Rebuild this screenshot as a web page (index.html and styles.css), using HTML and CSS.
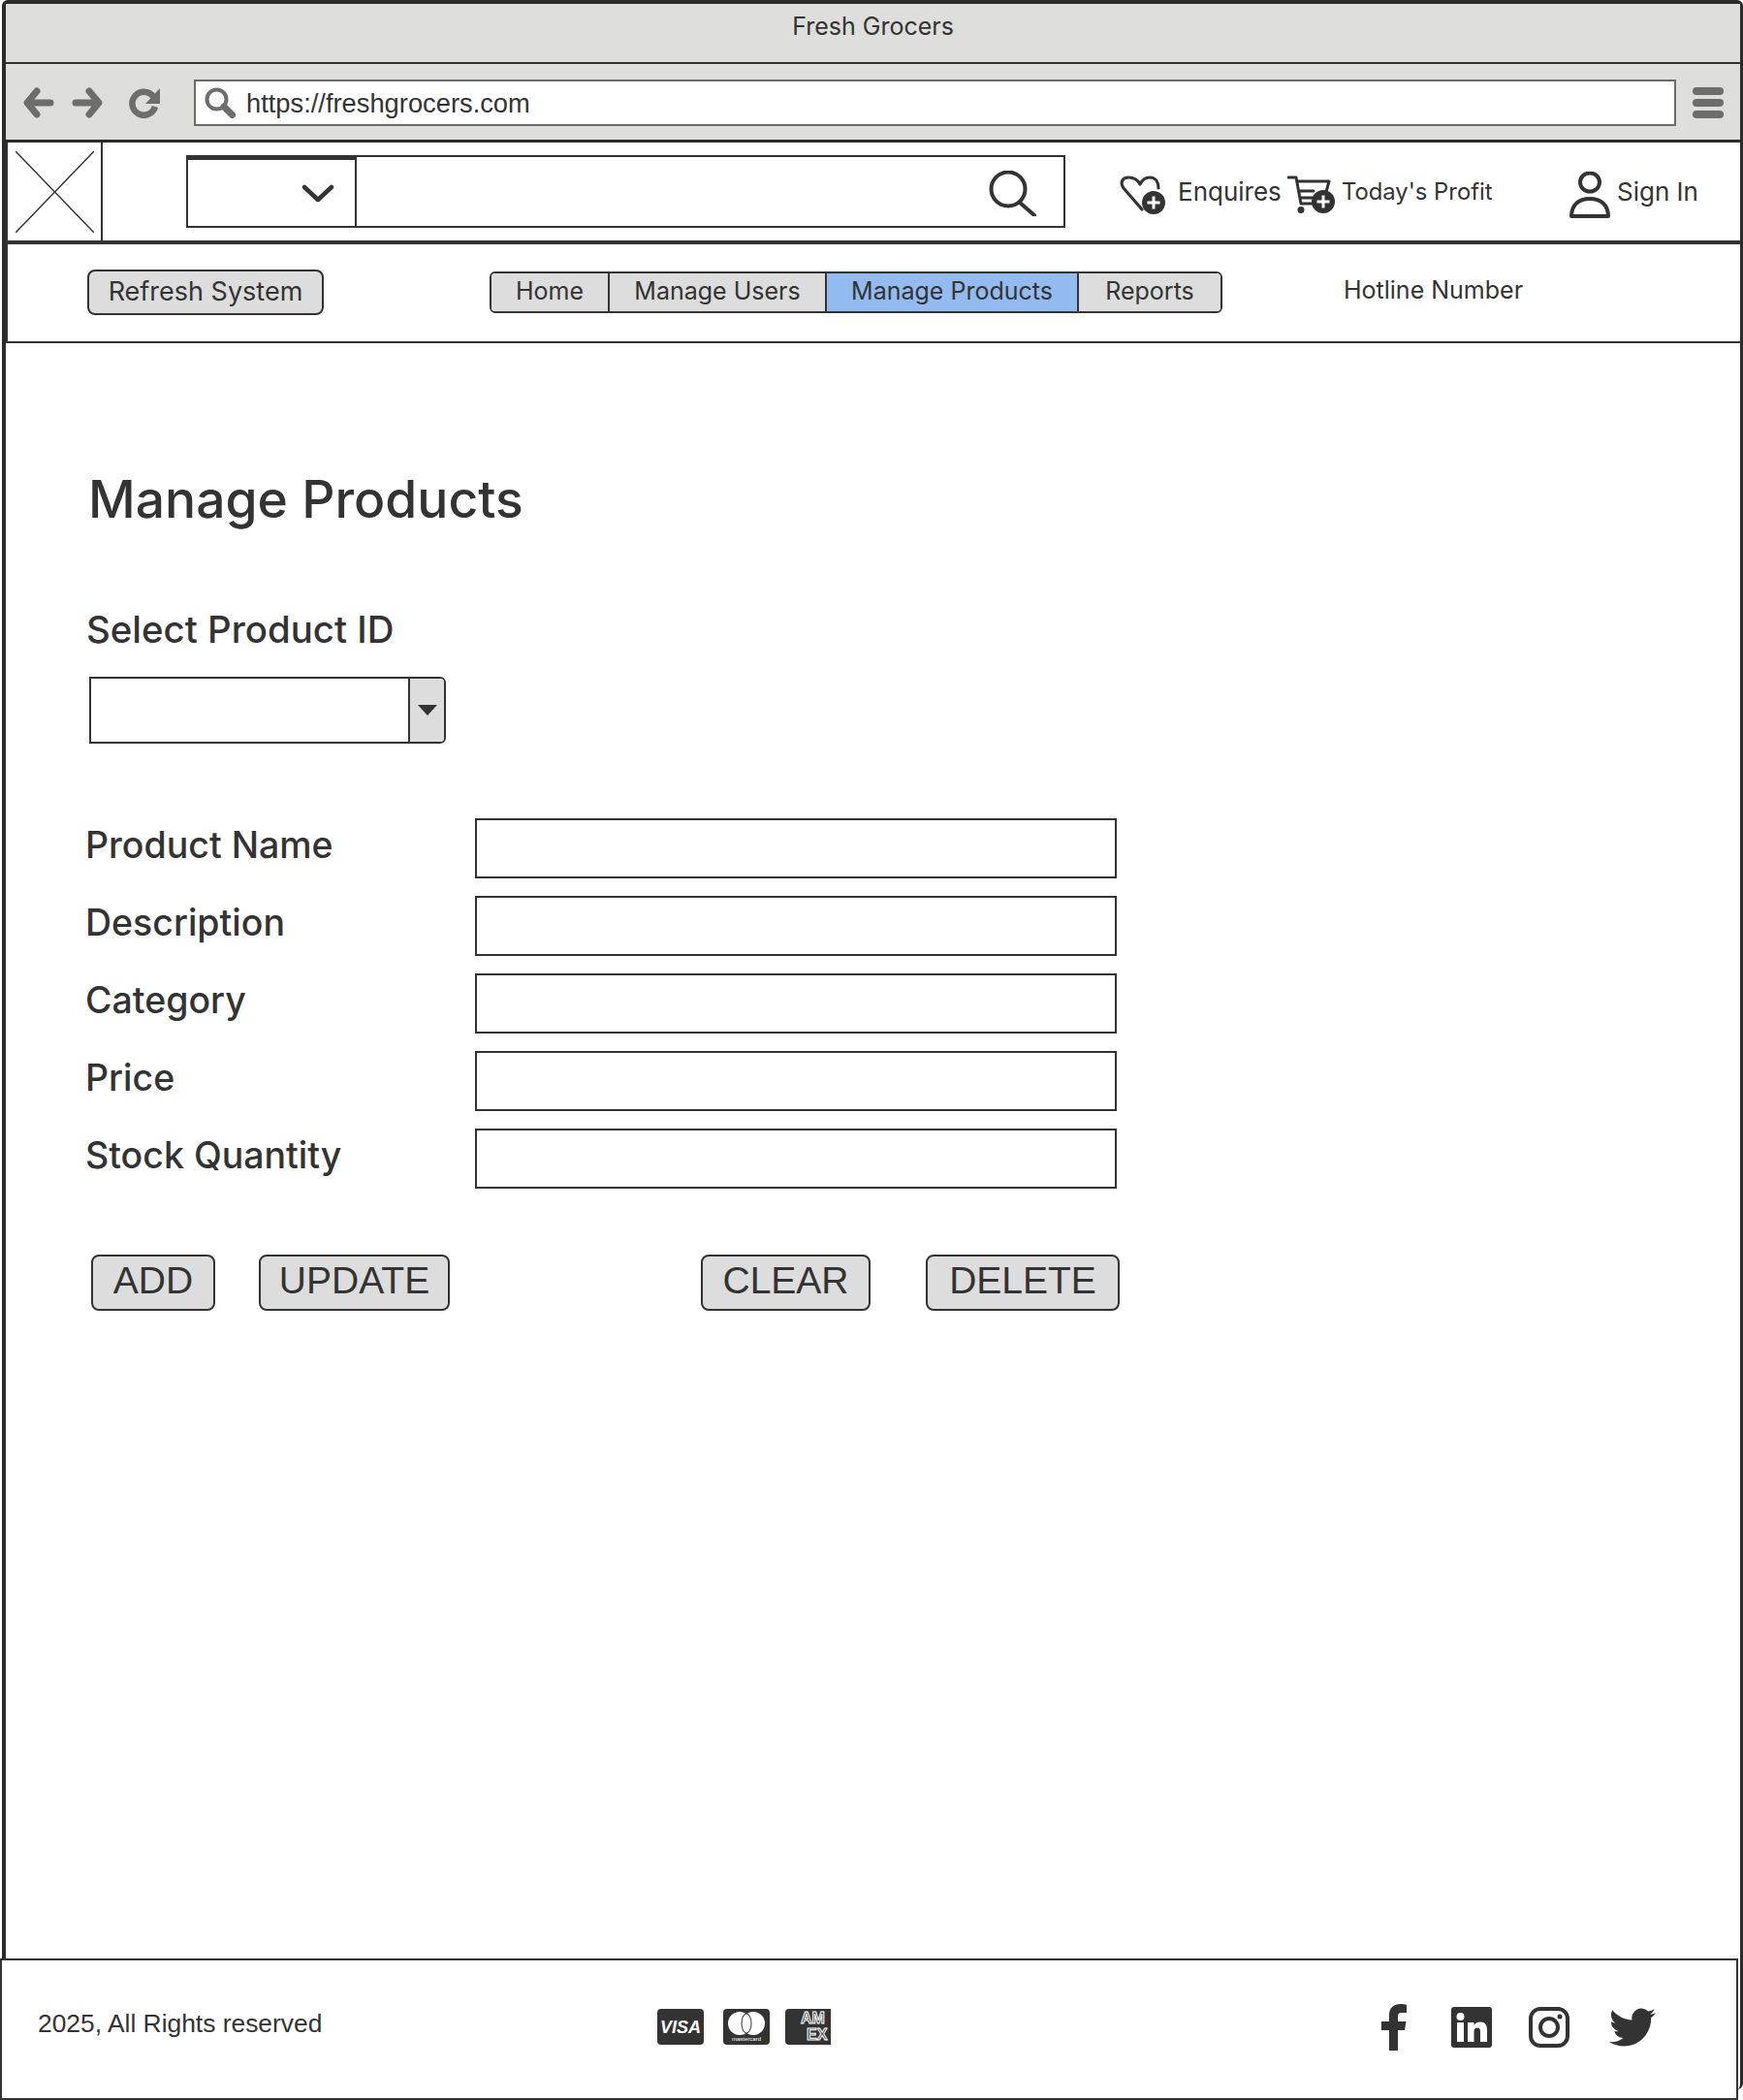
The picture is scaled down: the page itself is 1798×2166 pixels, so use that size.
FILE: index.html
```html
<!DOCTYPE html>
<html lang="en">
<head>
  <meta charset="UTF-8">
  <title>Fresh Grocers</title>
  <link rel="stylesheet" href="styles.css">
</head>
<body>
  <div class="window">
    <div class="titlebar">Fresh Grocers</div>

    <div class="toolbar">
      <svg class="tool-icon" viewBox="0 0 32 32"><path class="tool-stroke" d="M14 4 L4 16 L14 28 M5 16 H28"/></svg>
      <svg class="tool-icon forward" viewBox="0 0 32 32"><path class="tool-stroke" d="M18 4 L28 16 L18 28 M27 16 H4"/></svg>
      <svg class="tool-icon reload" viewBox="0 0 32 32"><path class="tool-stroke no-cap" d="M25 9.500 A12 12 0 1 0 27 20"/><path class="tool-fill" d="M32 1 V17 H17 Z"/></svg>
      <div class="address">
        <svg class="tool-icon" viewBox="0 0 32 32"><circle class="tool-stroke thin" cx="12.500" cy="12.500" r="10"/><path class="tool-stroke" d="M20 20 L28.500 28.500"/></svg>
        <span class="url">https://freshgrocers.com</span>
      </div>
      <div class="menu"><span></span><span></span><span></span></div>
    </div>

    <div class="header">
      <div class="logo">
        <svg viewBox="0 0 81 84" width="81" height="84"><path d="M0 0 L81 84 M81 0 L0 84" stroke="#333" stroke-width="1.500" fill="none"/></svg>
      </div>
      <div class="search">
        <div class="search-select">
          <svg width="34" height="19" viewBox="0 0 34 19"><path d="M3 3 L17 16 L31 3" stroke="#333" stroke-width="4.500" stroke-linecap="round" stroke-linejoin="round" fill="none"/></svg>
        </div>
        <div class="search-input">
          <svg class="search-icon" width="49" height="47" viewBox="0 0 49 47"><circle cx="20" cy="19" r="17.500" stroke="#333" stroke-width="4" fill="none"/><path d="M32 33 L47 46" stroke="#333" stroke-width="4" stroke-linecap="round"/></svg>
        </div>
      </div>

      <div class="head-link enquires">
        <svg width="48" height="40" viewBox="0 0 48 40">
          <path d="M24 35 L5 13 C1 7 4 2 10 2 C16 2 20 5 22 9 C24 5 27 2 32 2 C38 2 41 7 41 13" stroke="#333" stroke-width="3.200" fill="none" stroke-linecap="round" stroke-linejoin="round"/>
          <circle cx="36" cy="28" r="12" fill="#333"/>
          <path d="M36 21.500 V34.500 M29.500 28 H42.500" stroke="#fff" stroke-width="3"/>
        </svg>
        <span>Enquires</span>
      </div>
      <div class="head-link profit">
        <svg width="49" height="40" viewBox="0 0 49 40">
          <path d="M1 2 H9 L14 29 H28 M10 6 H43 L40 17 M12 16 H27 M13 23 H26" stroke="#333" stroke-width="3" fill="none" stroke-linecap="round" stroke-linejoin="round"/>
          <circle cx="14" cy="35.500" r="3.500" fill="#333"/>
          <circle cx="37" cy="27" r="12" fill="#333"/>
          <path d="M37 20.500 V33.500 M30.500 27 H43.500" stroke="#fff" stroke-width="3"/>
        </svg>
        <span>Today's Profit</span>
      </div>
      <div class="head-link signin">
        <svg width="42" height="48" viewBox="0 0 42 48">
          <ellipse cx="21" cy="11" rx="10" ry="9.500" stroke="#333" stroke-width="4" fill="none"/>
          <path d="M2 46 C2 34 10 28 21 28 C32 28 40 34 40 46 Z" stroke="#333" stroke-width="4" fill="none" stroke-linejoin="round"/>
        </svg>
        <span>Sign In</span>
      </div>
    </div>

    <div class="nav">
      <button class="btn refresh">Refresh System</button>
      <div class="tabs">
        <div class="tab tab-home">Home</div>
        <div class="tab tab-users">Manage Users</div>
        <div class="tab tab-products active">Manage Products</div>
        <div class="tab tab-reports">Reports</div>
      </div>
      <div class="hotline">Hotline Number</div>
    </div>

    <div class="main">
      <h1>Manage Products</h1>
      <div class="select-label">Select Product ID</div>
      <div class="select">
        <div class="select-value"></div>
        <div class="select-btn"><span class="caret"></span></div>
      </div>

      <div class="form">
        <label>Product Name</label><input type="text">
        <label>Description</label><input type="text">
        <label>Category</label><input type="text">
        <label>Price</label><input type="text">
        <label>Stock Quantity</label><input type="text">
      </div>

      <div class="actions">
        <button class="btn action add">ADD</button>
        <button class="btn action update">UPDATE</button>
        <button class="btn action clear">CLEAR</button>
        <button class="btn action delete">DELETE</button>
      </div>
    </div>
  </div>

  <div class="footer">
    <div class="copy">2025, All Rights reserved</div>
    <div class="cards">
      <svg width="48" height="37" viewBox="0 0 48 37"><rect width="48" height="37" rx="4" fill="#333"/><text class="visa" x="24" y="25" text-anchor="middle">VISA</text></svg>
      <svg width="48" height="37" viewBox="0 0 48 37"><rect width="48" height="37" rx="4" fill="#333"/><circle cx="17" cy="15" r="12" fill="#fff"/><circle cx="31" cy="15" r="12" fill="#fff"/><ellipse cx="24" cy="15" rx="5" ry="10" fill="#fff" stroke="#333" stroke-width="1"/><text class="mc" x="24" y="33" text-anchor="middle">mastercard</text></svg>
      <svg width="47" height="37" viewBox="0 0 47 37"><path d="M4 0 H47 V37 H4 A4 4 0 0 1 0 33 V4 A4 4 0 0 1 4 0 Z" fill="#333"/><text class="amex" x="16" y="15">AM</text><text class="amex" x="22" y="32">EX</text></svg>
    </div>
    <div class="social">
      <svg class="fb" width="26" height="48" viewBox="0 0 26 48"><path fill="#333" d="M17 48V27h7l1.500-9H17v-5c0-2.500.8-4 4-4h5V.8C25 .6 22.500 0 19.500 0 12.500 0 8 4 8 11.500V18H0v9h8v21z"/></svg>
      <svg class="in" width="42" height="42" viewBox="0 0 42 42"><rect width="42" height="42" rx="3" fill="#333"/><circle cx="9.500" cy="10" r="4" fill="#fff"/><rect x="6" y="16" width="7" height="20" fill="#fff"/><path fill="#fff" d="M17 16h6.500v3c1.500-2.300 3.800-3.500 6.500-3.500 5 0 7 3.300 7 8.500v12h-7V25.500c0-2.500-.8-4-3-4s-3.500 1.500-3.500 4V36H17z"/></svg>
      <svg class="ig" width="42" height="42" viewBox="0 0 42 42"><rect x="2" y="2" width="38" height="38" rx="10" fill="none" stroke="#333" stroke-width="4"/><circle cx="21" cy="21" r="9" fill="none" stroke="#333" stroke-width="4"/><circle cx="32" cy="10" r="2.500" fill="#333"/></svg>
      <svg class="tw" width="48" height="40" viewBox="0 0 24 20"><path fill="#333" transform="translate(0 -2)" d="M23.953 4.570a10 10 0 01-2.825.775 4.958 4.958 0 002.163-2.723c-.951.555-2.005.959-3.127 1.184a4.920 4.920 0 00-8.384 4.482C7.690 8.095 4.067 6.130 1.640 3.162a4.822 4.822 0 00-.666 2.475c0 1.710.870 3.213 2.188 4.096a4.904 4.904 0 01-2.228-.616v.060a4.923 4.923 0 003.946 4.827 4.996 4.996 0 01-2.212.085 4.936 4.936 0 004.604 3.417 9.867 9.867 0 01-6.102 2.105c-.390 0-.779-.023-1.170-.067a13.995 13.995 0 007.557 2.209c9.053 0 13.998-7.496 13.998-13.985 0-.210 0-.420-.015-.630A9.935 9.935 0 0024 4.590z"/></svg>
    </div>
  </div>
</body>
</html>
```

FILE: styles.css
```css
body {
  margin: 0;
  background-color: white;
  color: #333;
  font-family: "Inter", "Liberation Sans", sans-serif;
}

/* browser frame */
.window {
  box-sizing: border-box;
  width: 1796px;
  height: 2155px;
  margin-left: 2px;
  border: 4px solid #2b2b2b;
  border-right-width: 3px;
  border-bottom: none;
  border-radius: 6px;
}
.titlebar {
  box-sizing: border-box;
  height: 62px;
  padding-top: 8px;
  background-color: #dededc;
  border-bottom: 2px solid #333;
  text-align: center;
  font-size: 25px;
  line-height: 30px;
}
.toolbar {
  box-sizing: border-box;
  height: 81px;
  padding-top: 16px;
  padding-left: 18px;
  display: flex;
  align-items: flex-start;
  background-color: #dededc;
  border-bottom: 3px solid #2b2b2b;
}
.tool-icon {
  width: 32px;
  height: 32px;
  flex: none;
}
.tool-stroke {
  fill: none;
  stroke: #6d6d6d;
  stroke-width: 7;
  stroke-linecap: round;
  stroke-linejoin: round;
}
.tool-stroke.thin {
  stroke-width: 4;
}
.tool-stroke.no-cap {
  stroke-linecap: butt;
  stroke-width: 6.500;
}
.tool-fill {
  fill: #6d6d6d;
}
.toolbar > .tool-icon {
  margin-top: 8px;
}
.forward {
  margin-left: 18px;
}
.reload {
  margin-left: 27px;
}
.address {
  box-sizing: border-box;
  width: 1529px;
  height: 48px;
  margin-left: 35px;
  display: flex;
  align-items: center;
  padding-left: 9px;
  background-color: white;
  border: 2px solid #6b6b6b;
}
.url {
  margin-left: 11px;
  padding-top: 2px;
  font-family: "Liberation Sans", sans-serif;
  font-size: 27.300px;
}
.menu {
  margin-left: 17px;
  margin-top: 8px;
  width: 32px;
  display: flex;
  flex-direction: column;
  gap: 4px;
}
.menu span {
  height: 8px;
  border-radius: 4px;
  background-color: #6d6d6d;
}

/* store header */
.header {
  box-sizing: border-box;
  height: 105px;
  display: flex;
  align-items: center;
  border-left: 2px solid #333;
  border-bottom: 4px solid #333;
}
.logo {
  box-sizing: border-box;
  width: 98px;
  height: 101px;
  padding: 9px 0 0 8px;
  border-right: 2px solid #333;
}
.logo svg {
  display: block;
}
.search {
  box-sizing: border-box;
  width: 907px;
  height: 75px;
  margin-left: 86px;
  display: flex;
  border: 2px solid #333;
}
.search-select {
  box-sizing: border-box;
  width: 174px;
  display: flex;
  align-items: center;
  justify-content: flex-end;
  padding-right: 21px;
  border-top: 3px solid #333;
  border-right: 2px solid #333;
}
.search-input {
  flex: 1;
  display: flex;
  align-items: center;
  justify-content: flex-end;
  padding-right: 28px;
}
.search-icon {
  margin-top: 4px;
}
.head-link {
  display: flex;
  align-items: center;
  font-size: 26px;
  white-space: nowrap;
  flex: none;
}
.head-link svg {
  flex: none;
  margin-top: 7px;
}
.enquires {
  width: 164px;
  margin-left: 55px;
  gap: 13px;
}
.profit {
  width: 210px;
  margin-left: 10px;
  gap: 7px;
}
.profit span {
  font-size: 23.800px;
}
.signin {
  margin-left: 81px;
  gap: 7px;
}

/* nav row */
.nav {
  box-sizing: border-box;
  height: 102px;
  display: flex;
  align-items: center;
  padding-left: 82px;
  padding-bottom: 2px;
  border-left: 2px solid #333;
  border-bottom: 2px solid #333;
  font-size: 25px;
}
.btn {
  box-sizing: border-box;
  padding: 0;
  font-family: "Inter", "Liberation Sans", sans-serif;
  color: #333;
  background-color: #dddddd;
  border: 2px solid #333;
  border-radius: 8px;
}
.refresh {
  width: 244px;
  height: 47px;
  font-size: 27px;
  padding-bottom: 2px;
}
.tabs {
  box-sizing: border-box;
  margin-left: 171px;
  height: 43px;
  display: flex;
  border: 2px solid #333;
  border-radius: 6px;
  overflow: hidden;
}
.tab {
  box-sizing: border-box;
  display: flex;
  align-items: center;
  justify-content: center;
  padding-bottom: 3px;
  background-color: #dddddd;
  border-right: 2px solid #333;
}
.tab-home {
  width: 122px;
}
.tab-users {
  width: 224px;
}
.tab-products {
  width: 260px;
}
.tab-reports {
  width: 146px;
  border-right: none;
}
.active {
  background-color: #93bbf0;
}
.hotline {
  margin-left: 125px;
  padding-bottom: 4px;
}

/* page content */
.main {
  padding: 129px 0 0 85px;
}
h1 {
  margin: 0;
  font-size: 53.400px;
  font-weight: 500;
  line-height: 64px;
}
.select-label {
  margin-top: 80px;
  margin-left: -2px;
  font-size: 38.400px;
  font-weight: 500;
  line-height: 44px;
}
.select {
  box-sizing: border-box;
  width: 368px;
  height: 69px;
  margin-top: 27px;
  margin-left: 1px;
  display: flex;
  border: 2px solid #333;
  border-radius: 0 6px 6px 0;
}
.select-value {
  flex: 1;
}
.select-btn {
  width: 35px;
  display: flex;
  align-items: center;
  justify-content: center;
  background-color: #dddddd;
  border-left: 2px solid #333;
  border-radius: 0 4px 4px 0;
}
.caret {
  width: 0;
  height: 0;
  border-left: 10px solid transparent;
  border-right: 10px solid transparent;
  border-top: 11px solid #333;
}
.form {
  margin-top: 77px;
  display: grid;
  grid-template-columns: 399px 662px;
  grid-auto-rows: 62px;
  row-gap: 18px;
}
.form label {
  display: flex;
  align-items: center;
  margin-left: -3px;
  padding-bottom: 8px;
  font-size: 37.500px;
  font-weight: 500;
}
.form input {
  box-sizing: border-box;
  height: 62px;
  padding: 0;
  background-color: white;
  border: 2px solid #333;
  border-radius: 0;
}
.actions {
  margin-top: 68px;
  margin-left: 3px;
  display: flex;
}
.action {
  height: 58px;
  padding-bottom: 4px;
  font-family: "Liberation Sans", sans-serif;
  font-size: 39px;
}
.add {
  width: 128px;
}
.update {
  width: 197px;
  margin-left: 45px;
}
.clear {
  width: 175px;
  margin-left: 259px;
}
.delete {
  width: 200px;
  margin-left: 57px;
}

/* footer lies over the bottom of the window frame */
.footer {
  box-sizing: border-box;
  position: absolute;
  left: 0;
  top: 2020px;
  width: 1793px;
  height: 146px;
  display: flex;
  align-items: center;
  padding-bottom: 5px;
  background-color: white;
  border: 2px solid #333;
}
.copy {
  box-sizing: border-box;
  width: 676px;
  padding-left: 37px;
  padding-bottom: 7px;
  font-family: "Liberation Sans", sans-serif;
  font-size: 26.400px;
}
.cards {
  display: flex;
  gap: 20px;
}
.cards svg:last-child {
  margin-left: -4px;
}
.visa {
  font-family: "Liberation Sans", sans-serif;
  font-size: 18px;
  font-weight: bold;
  font-style: italic;
  fill: white;
}
.mc {
  font-family: "Liberation Sans", sans-serif;
  font-size: 6px;
  fill: white;
}
.amex {
  font-family: "Liberation Sans", sans-serif;
  font-size: 16px;
  font-weight: bold;
  fill: #333;
  stroke: white;
  stroke-width: 1;
}
.social {
  margin-left: 568px;
  display: flex;
  align-items: center;
}
.in {
  margin-left: 46px;
}
.ig {
  margin-left: 38px;
}
.tw {
  margin-left: 41px;
}
```
